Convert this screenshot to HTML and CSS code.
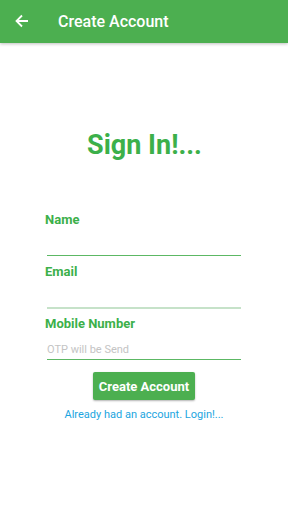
FILE: index.html
```html
<!DOCTYPE html>
<html lang="en">
<head>
    <meta charset="UTF-8">
    <meta name="viewport" content="width=device-width, initial-scale=1.0">
    <title>Create Account</title>
    <link rel="stylesheet" href="styles.css">
</head>
<body>
    <div class="appbar">
        <svg class="back" width="14" height="14" viewBox="0 0 14 14">
            <path d="M13 7H2M7 1.5L1.5 7 7 12.5" fill="none" stroke="#fff" stroke-width="1.8"/>
        </svg>
        <span class="title">Create Account</span>
    </div>
    <div class="main">
        <h1 class="heading">Sign In!...</h1>
        <form class="form">
            <label class="label">Name</label>
            <div class="field"></div>
            <label class="label">Email</label>
            <div class="field light"></div>
            <label class="label">Mobile Number</label>
            <div class="field"><span class="hint">OTP will be Send</span></div>
            <button type="button" class="btn">Create Account</button>
            <a class="link">Already had an account. Login!...</a>
        </form>
    </div>
</body>
</html>
```

FILE: styles.css
```css
*{
    margin: 0;
    padding: 0;
    box-sizing: border-box;
}
body{
    font-family: Roboto, "Liberation Sans", sans-serif;
    background: #fff;
    width: 288px;
    height: 512px;
    overflow: hidden;
}
.appbar{
    height: 43px;
    background: #4caf50;
    display: flex;
    align-items: center;
    padding-left: 15px;
    box-shadow: 0 1px 3px rgba(0,0,0,0.25);
}
.back{
    margin-top: -1px;
}
.title{
    color: #fff;
    font-size: 16px;
    font-weight: 500;
    margin-left: 29px;
    margin-top: -1px;
}
.main{
    padding-top: 85px;
}
.heading{
    text-align: center;
    color: #3cb04a;
    font-size: 27px;
    font-weight: bold;
    line-height: 34px;
    margin-left: 1px;
}
.form{
    display: flex;
    flex-direction: column;
    padding: 0 47px 0 45px;
    margin-top: 50px;
}
.label{
    color: #3cb04a;
    font-size: 13px;
    font-weight: bold;
    line-height: 16px;
}
.field{
    height: 28px;
    margin: 0 0 8px 2px;
    border-bottom: 1px solid #5cb864;
    display: flex;
    align-items: flex-end;
    padding-bottom: 3px;
}
.field.light{
    border-bottom: 2px solid #c6e2c9;
    height: 29px;
    margin-bottom: 7px;
}
.field:last-of-type{
    margin-bottom: 0;
}
.hint{
    color: #c4c4c4;
    font-size: 11px;
    line-height: 13px;
}
.btn{
    align-self: center;
    margin: 12px 0 0 2px;
    width: 102px;
    height: 28px;
    background: #4caf50;
    color: #fff;
    border: none;
    border-radius: 2px;
    font-family: Roboto, "Liberation Sans", sans-serif;
    font-size: 13px;
    font-weight: bold;
    box-shadow: 0 1px 2px rgba(0,0,0,0.3);
}
.link{
    align-self: center;
    margin: 8px 0 0 2px;
    color: #1ba5e0;
    font-size: 11px;
    line-height: 14px;
}
```
